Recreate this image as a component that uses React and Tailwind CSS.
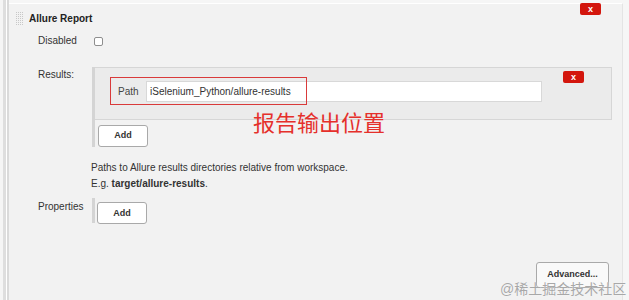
import React from 'react';

const RemoveButton = ({ className = '' }) => (
  <button
    className={`w-[21px] h-[12px] rounded-[2px] bg-[#d3160d] text-white text-[9px] leading-[12px] font-bold flex items-center justify-center ${className}`}
  >
    x
  </button>
);

const AddButton = () => (
  <button className="w-[50px] h-[22px] bg-white border border-[#a9a9a9] rounded-[3px] text-[9px] font-bold text-[#333] leading-none">
    Add
  </button>
);

const Grip = () => (
  <svg width="8" height="14" viewBox="0 0 8 14" className="block">
    {[0, 1, 2, 3, 4, 5, 6].map((r) =>
      [0, 1, 2, 3].map((c) => (
        <rect key={`${r}-${c}`} x={c * 2} y={r * 2} width="1" height="1" fill="#c8c8c8" />
      ))
    )}
  </svg>
);

const App = () => {
  return (
    <div
      className="relative w-[629px] h-[300px] overflow-hidden bg-[#f6f6f6] flex text-[#333]"
      style={{ fontFamily: '"Liberation Sans", "Noto Sans CJK SC", sans-serif' }}
    >
      {/* left edge stripes */}
      <div className="w-[3px] bg-[#f5f5f5]" />
      <div className="w-[3px] bg-[#dedede]" />
      <div className="w-[1px] bg-white" />
      <div className="w-[2px] bg-[#dadada]" />

      {/* main panel */}
      <div className="flex-1 pt-[3px] pr-[6px]">
        <div className="h-full bg-[#f2f2f2] border-t border-white border-r border-r-[#e4e4e4] flex flex-col">
          {/* header */}
          <div className="flex justify-between items-start">
            <div className="flex items-center mt-[8px] ml-[7px] h-[14px]">
              <Grip />
              <span className="ml-[5px] text-[10px] font-bold text-[#222] leading-[14px]">Allure Report</span>
            </div>
            <RemoveButton className="mr-[21px] -mt-[1px]" />
          </div>

          {/* Disabled */}
          <div className="flex items-center mt-[8px] pl-[29px] h-[14px]">
            <span className="w-[56px] text-[10px] leading-[14px]">Disabled</span>
            <span className="w-[9px] h-[9px] bg-white border border-[#8e8e8e] rounded-[2px]" />
          </div>

          {/* Results */}
          <div className="flex mt-[19px] pl-[29px]">
            <span className="w-[54px] pt-[1px] text-[10px] leading-[14px]">Results:</span>
            <div className="flex-1 mr-[10px] border-l-[3px] border-[#d4d4d4] flex flex-col">
              <div className="relative h-[53px] bg-[#ebebeb] border border-l-0 border-[#d6d6d6] flex items-start">
                <div className="flex items-center mt-[13px] pl-[23px]">
                  <span className="w-[28px] text-[10px] text-[#444] leading-[14px]">Path</span>
                  <div className="w-[396px] h-[21px] bg-white border border-[#d8d8d8] flex items-center pl-[3px] text-[10px] text-[#333]">
                    iSelenium_Python/allure-results
                  </div>
                </div>
                <RemoveButton className="ml-[21px] mt-[3px]" />
                {/* annotation box */}
                <div className="absolute left-[15px] top-[9px] w-[197px] h-[28px] border border-[#d93a3a]" />
              </div>
              <div className="mt-[1px] ml-[3px]">
                <AddButton />
              </div>
            </div>
          </div>

          {/* help */}
          <div className="mt-[13px] pl-[82px] text-[10px] leading-[16px] text-[#333]">
            <div>Paths to Allure results directories relative from workspace.</div>
            <div>
              E.g. <b>target/allure-results</b>.
            </div>
          </div>

          {/* Properties */}
          <div className="flex mt-[6px] pl-[29px]">
            <span className="w-[54px] pt-[2px] text-[10px] leading-[14px]">Properties</span>
            <div className="border-l-[3px] border-[#d4d4d4] h-[25px] pt-[1px] pl-[2px]">
              <AddButton />
            </div>
          </div>

          {/* Advanced */}
          <div className="flex justify-end mt-[39px] mr-[13px]">
            <button className="w-[73px] h-[26px] bg-[#f9f9f9] border border-[#a9a9a9] rounded-[3px] text-[9px] font-bold text-[#333]">
              Advanced...
            </button>
          </div>
        </div>
      </div>

      {/* red annotation */}
      <div className="absolute left-[253px] top-[110px] text-[22px] leading-[28px] text-[#e5302b]">
        报告输出位置
      </div>

      {/* watermark */}
      <div
        className="absolute left-[500px] top-[280px] text-[14px] leading-[18px] text-[#a8a8a8] whitespace-nowrap"
        style={{ textShadow: '0 0 1px #fff' }}
      >
        @稀土掘金技术社区
      </div>
    </div>
  );
};

export default App;
